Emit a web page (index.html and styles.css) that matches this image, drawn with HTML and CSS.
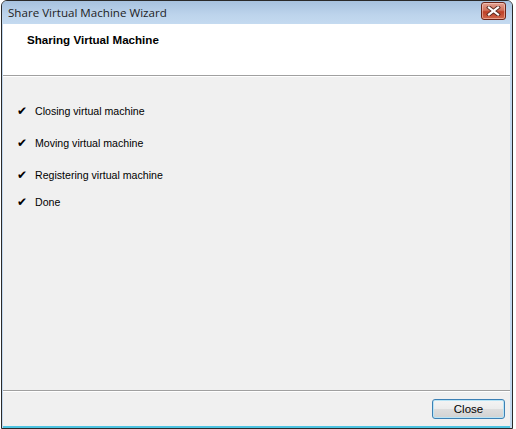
FILE: index.html
```html
<!DOCTYPE html>
<html lang="en">
<head>
    <meta charset="UTF-8">
    <title>Share Virtual Machine Wizard</title>
    <link rel="stylesheet" href="styles.css">
</head>
<body>
    <div class="window">
        <div class="titlebar">
            <span class="title">Share Virtual Machine Wizard</span>
            <button class="close-x" type="button" aria-label="Close">
                <svg width="15" height="10" viewBox="0 0 15 10">
                    <path d="M3 1.5 L12 8.5 M12 1.5 L3 8.5" stroke="#5a2a20" stroke-width="4" stroke-linecap="square"/>
                    <path d="M3 1.5 L12 8.5 M12 1.5 L3 8.5" stroke="#fff" stroke-width="2.2" stroke-linecap="square"/>
                </svg>
            </button>
        </div>
        <div class="client">
            <div class="header">
                <h1>Sharing Virtual Machine</h1>
            </div>
            <div class="content">
                <ul class="steps">
                    <li class="step"><span class="check">&#10004;</span>Closing virtual machine</li>
                    <li class="step"><span class="check">&#10004;</span>Moving virtual machine</li>
                    <li class="step"><span class="check">&#10004;</span>Registering virtual machine</li>
                    <li class="step short"><span class="check">&#10004;</span>Done</li>
                </ul>
            </div>
            <div class="footer">
                <button type="button" class="btn">Close</button>
            </div>
        </div>
    </div>
</body>
</html>
```

FILE: styles.css
```css
html, body {
    margin: 0;
    padding: 0;
}
body {
    background: #ffffff;
    font-family: 'Liberation Sans', Arial, sans-serif;
    font-size: 11px;
    color: #000;
    width: 516px;
    height: 429px;
    overflow: hidden;
}
.window {
    margin-left: 1px;
    width: 510px;
    height: 427px;
    border: 1px solid #2a2a2a;
    border-radius: 6px 6px 0 0;
    background: #c2d8ee;
    display: flex;
    flex-direction: column;
    box-sizing: content-box;
}
.titlebar {
    height: 23px;
    display: flex;
    align-items: center;
    justify-content: space-between;
    padding: 0 6px 0 6px;
    background: linear-gradient(to bottom, #a7c2df, #bdd4ec 60%, #c4daf0);
    border-radius: 5px 5px 0 0;
}
.title {
    font-family: 'Open Sans', 'Noto Sans', sans-serif;
    font-size: 11.6px;
    color: #1e1e1e;
    margin-top: -1px;
}
.close-x {
    width: 25px;
    height: 18px;
    margin-top: -3px;
    padding: 0;
    border: 1px solid #6b2418;
    border-radius: 3px;
    background: linear-gradient(to bottom, #e4a293, #d0715c 45%, #be4027 55%, #d0684d);
    display: flex;
    align-items: center;
    justify-content: center;
    box-shadow: inset 0 0 0 1px rgba(255, 220, 210, 0.5);
}
.client {
    flex: 1;
    margin: 0 2px 0 1px;
    background: #f0f0f0;
    display: flex;
    flex-direction: column;
    border-bottom: 2px solid #4ec4e2;
}
.header {
    height: 51px;
    background: #ffffff;
    border-bottom: 1px solid #a0a0a0;
    padding-left: 24px;
}
h1 {
    margin: 9px 0 0 0;
    font-size: 11.6px;
    font-weight: bold;
    font-family: 'Liberation Sans', Tahoma, sans-serif;
}
.content {
    flex: 1;
    border-top: 1px solid #ffffff;
}
.steps {
    list-style: none;
    margin: 0;
    padding: 27px 0 0 14px;
    font-size: 10.6px;
}
.step {
    display: flex;
    align-items: center;
    height: 14px;
    margin-bottom: 18px;
}
.step.short {
    margin-top: -5px;
}
.check {
    width: 18px;
    font-size: 12px;
    font-family: 'DejaVu Sans', sans-serif;
}
.footer {
    height: 35px;
    border-top: 1px solid #a0a0a0;
    box-shadow: inset 0 1px 0 #ffffff;
    display: flex;
    justify-content: flex-end;
    align-items: flex-start;
    padding-right: 5px;
}
.btn {
    margin-top: 8px;
    width: 73px;
    height: 20px;
    padding: 0;
    border: 1px solid #3c80b4;
    border-radius: 3px;
    background: linear-gradient(to bottom, #f4f4f4, #ececec 48%, #dddddd 52%, #d2d2d2);
    box-shadow: inset 0 0 0 1px #b8e4f6;
    font-family: 'Liberation Sans', Arial, sans-serif;
    font-size: 11.5px;
    color: #000;
}
```
